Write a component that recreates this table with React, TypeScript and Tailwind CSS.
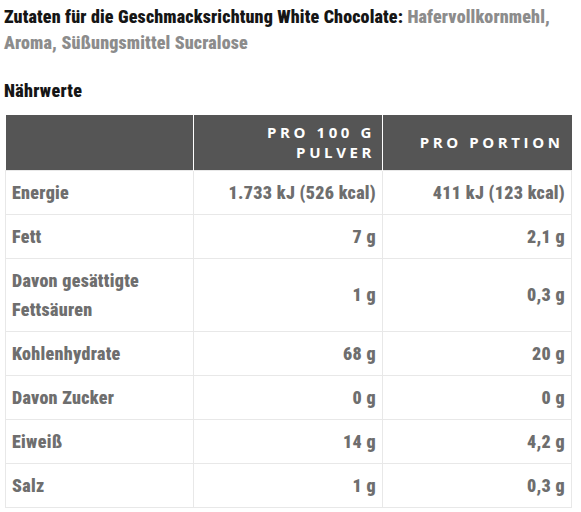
import React from 'react';

const rows: [string, string, string][] = [
  ['Energie', '1.733 kJ (526 kcal)', '411 kJ (123 kcal)'],
  ['Fett', '7 g', '2,1 g'],
  ['Davon gesättigte Fettsäuren', '1 g', '0,3 g'],
  ['Kohlenhydrate', '68 g', '20 g'],
  ['Davon Zucker', '0 g', '0 g'],
  ['Eiweiß', '14 g', '4,2 g'],
  ['Salz', '1 g', '0,3 g'],
];

const cond = "font-['Roboto',sans-serif] font-black [font-stretch:75%] tracking-[0.3px]";

export default function App() {
  return (
    <div className="w-[581px] h-[512px] bg-white overflow-hidden">
      <p className={`${cond} text-[18px] leading-[26px] tracking-[0.15px] pl-[4px] pt-[4px] pr-[2px] text-[#151515]`}>
        Zutaten für die Geschmacksrichtung White Chocolate:{' '}
        <span className="text-[#8c8c8c]">Hafervollkornmehl, Aroma, Süßungsmittel Sucralose</span>
      </p>
      <h3 className={`${cond} text-[18px] leading-[26px] pl-[4px] mt-[22px] text-[#151515]`}>Nährwerte</h3>
      <table className="ml-[5px] mt-[11px] w-[567px] border-collapse table-fixed">
        <thead>
          <tr className="bg-[#555555] text-white font-['Open_Sans',sans-serif] font-bold text-[15px] leading-[20px] tracking-[3.6px] uppercase">
            <th className="w-[188px] h-[55px] border-r border-white"></th>
            <th className="w-[189px] h-[55px] text-right pr-[7px] border-r border-white">Pro 100 g<br />Pulver</th>
            <th className="h-[55px] text-right pr-[8px]">Pro Portion</th>
          </tr>
        </thead>
        <tbody className={`${cond} text-[18px] leading-[29px] text-[#6e6e6e]`}>
          {rows.map(([label, a, b]) => (
            <tr key={label}>
              <td className="border border-[#e8e8e8] px-[6px] py-[7px] pr-[40px]">{label}</td>
              <td className="border border-[#e8e8e8] px-[6px] py-[7px] text-right">{a}</td>
              <td className="border border-[#e8e8e8] px-[6px] py-[7px] text-right">{b}</td>
            </tr>
          ))}
        </tbody>
      </table>
    </div>
  );
}
